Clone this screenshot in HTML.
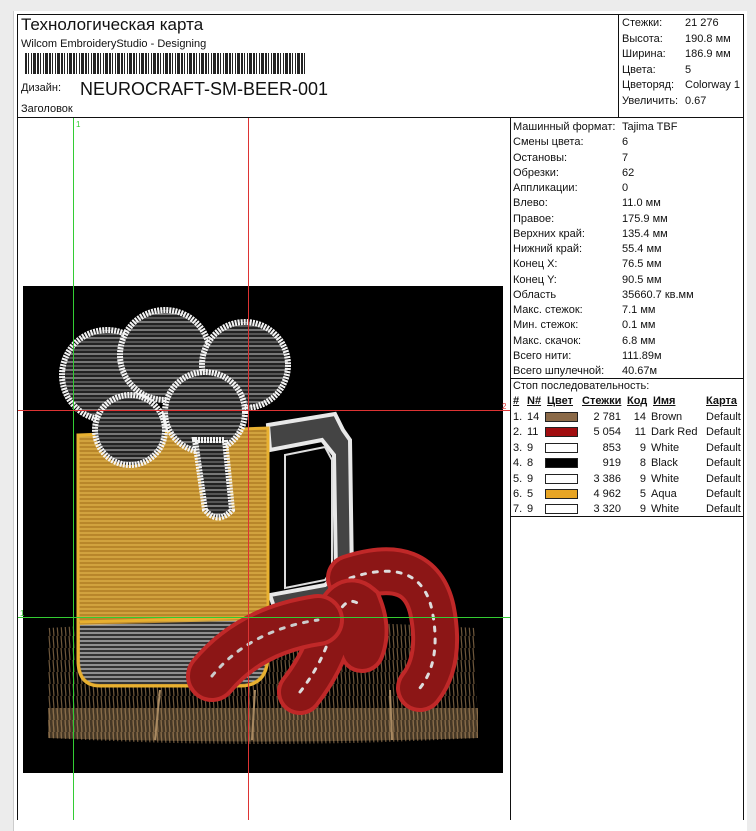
<!DOCTYPE html>
<html><head><meta charset="utf-8"><style>
*{margin:0;padding:0;box-sizing:border-box}
body{width:756px;height:820px;background:#ececec;position:relative;overflow:hidden;font-family:"Liberation Sans",Arial,sans-serif;color:#111}
.t{position:absolute;white-space:nowrap;line-height:1}
.l{position:absolute;background:#111}
</style></head><body>
<div style="position:absolute;left:13px;top:11px;width:734px;height:820px;background:#fff;border-left:1px solid #ccc"></div>
<div class="l" style="left:17px;top:14px;width:727px;height:1px"></div>
<div class="l" style="left:17px;top:14px;width:1px;height:806px"></div>
<div class="l" style="left:743px;top:14px;width:1px;height:806px"></div>
<div class="l" style="left:618px;top:14px;width:1px;height:103px"></div>
<div class="l" style="left:17px;top:117px;width:727px;height:1px"></div>
<div class="l" style="left:510px;top:117px;width:1px;height:703px"></div>
<div class="l" style="left:510px;top:378px;width:234px;height:1px"></div>
<div class="l" style="left:510px;top:516px;width:234px;height:1px"></div>
<div class="t" style="left:21px;top:16px;font-size:17px">Технологическая карта</div>
<div class="t" style="left:21px;top:39px;font-size:11px">Wilcom EmbroideryStudio - Designing</div>
<div style="position:absolute;left:25px;top:53px;width:280px;height:21px;background:repeating-linear-gradient(90deg,#222 0 2px,#fff 2px 3px,#222 3px 4px,#fff 4px 6px,#222 6px 7px,#fff 7px 8px,#222 8px 11px,#fff 11px 12px)"></div>
<div class="t" style="left:21px;top:83px;font-size:11px">Дизайн:</div>
<div class="t" style="left:80px;top:80px;font-size:18px">NEUROCRAFT-SM-BEER-001</div>
<div class="t" style="left:21px;top:104px;font-size:11px">Заголовок</div>
<div class="t" style="left:622px;top:16px;font-size:11px;line-height:15.6px">Стежки:<br>Высота:<br>Ширина:<br>Цвета:<br>Цветоряд:<br>Увеличить:</div>
<div class="t" style="left:685px;top:16px;font-size:11px;line-height:15.6px">21 276<br>190.8 мм<br>186.9 мм<br>5<br>Colorway 1<br>0.67</div>
<div class="t" style="left:513px;top:120px;font-size:11px;line-height:15.25px">Машинный формат:<br>Смены цвета:<br>Остановы:<br>Обрезки:<br>Аппликации:<br>Влево:<br>Правое:<br>Верхних край:<br>Нижний край:<br>Конец X:<br>Конец Y:<br>Область<br>Макс. стежок:<br>Мин. стежок:<br>Макс. скачок:<br>Всего нити:<br>Всего шпулечной:</div>
<div class="t" style="left:622px;top:120px;font-size:11px;line-height:15.25px">Tajima TBF<br>6<br>7<br>62<br>0<br>11.0 мм<br>175.9 мм<br>135.4 мм<br>55.4 мм<br>76.5 мм<br>90.5 мм<br>35660.7 кв.мм<br>7.1 мм<br>0.1 мм<br>6.8 мм<br>111.89м<br>40.67м</div>
<div class="t" style="left:513px;top:381px;font-size:11px">Стоп последовательность:</div>
<div class="t" style="left:513px;top:396px;font-size:11px;font-weight:bold;text-decoration:underline">#</div>
<div class="t" style="left:527px;top:396px;font-size:11px;font-weight:bold;text-decoration:underline">N#</div>
<div class="t" style="left:547px;top:396px;font-size:11px;font-weight:bold;text-decoration:underline">Цвет</div>
<div class="t" style="left:582px;top:396px;font-size:11px;font-weight:bold;text-decoration:underline">Стежки</div>
<div class="t" style="left:627px;top:396px;font-size:11px;font-weight:bold;text-decoration:underline">Код</div>
<div class="t" style="left:653px;top:396px;font-size:11px;font-weight:bold;text-decoration:underline">Имя</div>
<div class="t" style="left:706px;top:396px;font-size:11px;font-weight:bold;text-decoration:underline">Карта</div>
<div style="position:absolute;left:513px;top:410px;font-size:11px;line-height:15.4px">
<div style="display:flex"><span style="width:14px">1.</span><span style="width:18px">14</span><span style="width:33px;height:10px;margin-top:2px;background:#8b6a48;border:1px solid #222"></span><span style="width:43px;text-align:right">2 781</span><span style="width:25px;text-align:right">14</span><span style="width:60px;padding-left:5px">Brown</span><span>Default</span></div>
<div style="display:flex"><span style="width:14px">2.</span><span style="width:18px">11</span><span style="width:33px;height:10px;margin-top:2px;background:#a10d0f;border:1px solid #222"></span><span style="width:43px;text-align:right">5 054</span><span style="width:25px;text-align:right">11</span><span style="width:60px;padding-left:5px">Dark Red</span><span>Default</span></div>
<div style="display:flex"><span style="width:14px">3.</span><span style="width:18px">9</span><span style="width:33px;height:10px;margin-top:2px;background:#fff;border:1px solid #222"></span><span style="width:43px;text-align:right">853</span><span style="width:25px;text-align:right">9</span><span style="width:60px;padding-left:5px">White</span><span>Default</span></div>
<div style="display:flex"><span style="width:14px">4.</span><span style="width:18px">8</span><span style="width:33px;height:10px;margin-top:2px;background:#000;border:1px solid #222"></span><span style="width:43px;text-align:right">919</span><span style="width:25px;text-align:right">8</span><span style="width:60px;padding-left:5px">Black</span><span>Default</span></div>
<div style="display:flex"><span style="width:14px">5.</span><span style="width:18px">9</span><span style="width:33px;height:10px;margin-top:2px;background:#fff;border:1px solid #222"></span><span style="width:43px;text-align:right">3 386</span><span style="width:25px;text-align:right">9</span><span style="width:60px;padding-left:5px">White</span><span>Default</span></div>
<div style="display:flex"><span style="width:14px">6.</span><span style="width:18px">5</span><span style="width:33px;height:10px;margin-top:2px;background:#e8a524;border:1px solid #222"></span><span style="width:43px;text-align:right">4 962</span><span style="width:25px;text-align:right">5</span><span style="width:60px;padding-left:5px">Aqua</span><span>Default</span></div>
<div style="display:flex"><span style="width:14px">7.</span><span style="width:18px">9</span><span style="width:33px;height:10px;margin-top:2px;background:#fff;border:1px solid #222"></span><span style="width:43px;text-align:right">3 320</span><span style="width:25px;text-align:right">9</span><span style="width:60px;padding-left:5px">White</span><span>Default</span></div>
</div>
<svg style="position:absolute;left:0;top:0" width="756" height="820">
<defs>
<pattern id="hatch" width="4" height="12" patternUnits="userSpaceOnUse"><line x1="1" y1="0" x2="2" y2="12" stroke="#8a6d4a" stroke-width="1.2"/></pattern>
<pattern id="swirl" width="8" height="8" patternUnits="userSpaceOnUse"><rect width="8" height="8" fill="#222"/><line x1="0" y1="2" x2="8" y2="2" stroke="#ccc" stroke-width="1"/><line x1="0" y1="6" x2="8" y2="6" stroke="#888" stroke-width="1"/></pattern>
<pattern id="beer" width="6" height="4" patternUnits="userSpaceOnUse"><rect width="6" height="4" fill="#b8862a"/><line x1="0" y1="1" x2="6" y2="1" stroke="#e2b54a" stroke-width="1.2"/></pattern>
<pattern id="silver" width="6" height="4" patternUnits="userSpaceOnUse"><rect width="6" height="4" fill="#333"/><line x1="0" y1="1" x2="6" y2="1" stroke="#ccc" stroke-width="1.2"/></pattern>
</defs>
<rect x="23" y="286" width="480" height="487" fill="#000"/>
<path d="M48 628 Q260 615 475 628 L478 738 Q260 750 48 738 Z" fill="url(#hatch)" opacity=".8"/>
<path d="M48 708 L478 708 L478 738 Q260 745 48 738 Z" fill="url(#hatch)"/>
<path d="M48 708 L478 708 L478 738 Q260 745 48 738 Z" fill="#8a6d4a" opacity=".5"/>
<g stroke="#a98a62" stroke-width="2"><line x1="160" y1="690" x2="155" y2="740"/><line x1="255" y1="690" x2="252" y2="740"/><line x1="390" y1="690" x2="392" y2="740"/></g>
<path d="M268 425 L335 414 L343 430 L350 440 L352 580 L340 595 L275 610 L270 595 L325 585 L336 575 L334 455 L322 440 L270 450 Z" fill="#444" stroke="#e8e8e8" stroke-width="4"/>
<path d="M285 455 L325 447 L332 460 L332 570 L325 580 L285 588 Z" fill="#000" stroke="#ddd" stroke-width="2"/>
<path d="M78 435 L268 428 L268 655 Q268 686 240 686 L100 686 Q78 686 78 660 Z" fill="url(#beer)" stroke="#e8b030" stroke-width="3"/>
<path d="M80 625 L266 620 L266 655 Q266 684 240 684 L100 684 Q80 684 80 660 Z" fill="url(#silver)"/>
<path d="M80 622 L266 617" stroke="#e8b030" stroke-width="3"/>
<g fill="url(#swirl)" stroke="#f4f4f4" stroke-width="6" stroke-dasharray="2 1">
<circle cx="107" cy="375" r="45"/><circle cx="165" cy="355" r="45"/><circle cx="245" cy="365" r="43"/><circle cx="130" cy="430" r="35"/><circle cx="205" cy="412" r="40"/>
<path d="M195 440 L225 440 L232 510 Q218 525 205 510 Z"/>
</g>
<g fill="none" stroke-linecap="round">
<path d="M350 578 Q420 555 432 610 Q442 660 420 688" stroke="#c02828" stroke-width="48"/>
<path d="M350 578 Q420 555 432 610 Q442 660 420 688" stroke="#8c1616" stroke-width="40"/>
<path d="M350 578 Q420 555 432 610 Q442 660 420 688" stroke="#ddd" stroke-width="3" stroke-dasharray="4 8"/>
<path d="M300 692 Q325 660 333 625 Q345 592 360 605 Q370 630 362 650" stroke="#c02828" stroke-width="46"/>
<path d="M300 692 Q325 660 333 625 Q345 592 360 605 Q370 630 362 650" stroke="#8c1616" stroke-width="38"/>
<path d="M300 692 Q325 660 333 625 Q345 592 360 605" stroke="#ddd" stroke-width="3" stroke-dasharray="4 8"/>
<path d="M212 676 Q250 630 318 620" stroke="#c02828" stroke-width="52"/>
<path d="M212 676 Q250 630 318 620" stroke="#8c1616" stroke-width="44"/>
<path d="M212 676 Q250 630 318 620" stroke="#ccc" stroke-width="3" stroke-dasharray="4 8"/>
</g>
<line x1="73.5" y1="118" x2="73.5" y2="820" stroke="#3c3" stroke-width="1"/>
<line x1="18" y1="617.5" x2="510" y2="617.5" stroke="#3c3" stroke-width="1"/>
<line x1="248.5" y1="118" x2="248.5" y2="820" stroke="#d33" stroke-width="1"/>
<line x1="18" y1="410.5" x2="510" y2="410.5" stroke="#d33" stroke-width="1"/>
<text x="76" y="127" font-size="8" fill="#3c3" font-family="Liberation Sans">1</text>
<text x="20" y="616" font-size="8" fill="#3c3" font-family="Liberation Sans">1</text>
<text x="502" y="409" font-size="8" fill="#d33" font-family="Liberation Sans">2</text>
</svg>
</body></html>
